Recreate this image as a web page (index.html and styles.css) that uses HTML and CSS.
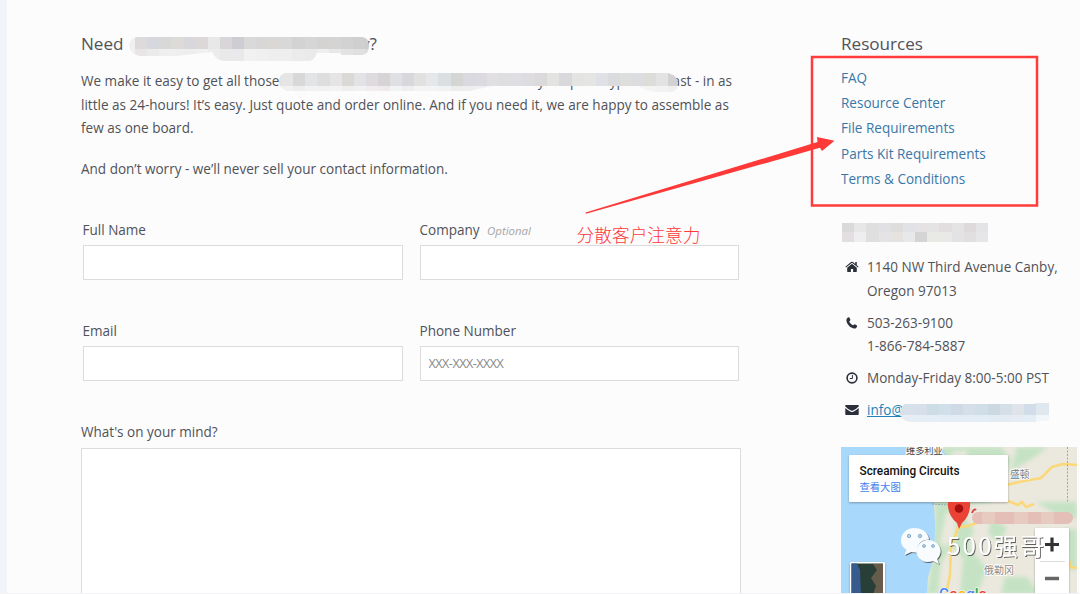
FILE: index.html
```html
<!DOCTYPE html>
<html lang="en">
<head>
<meta charset="utf-8">
<title>Contact</title>
<link rel="stylesheet" href="styles.css">
</head>
<body>
<div class="page">
  <main class="main">
    <h2 class="heading heading-split"><span>Need</span><span>y?</span></h2>
    <div class="intro">
      <div class="split"><span>We make it easy to get all those</span><span>your prototype runs fast - in as</span></div>
      <div>little as 24-hours! It’s easy. Just quote and order online. And if you need it, we are happy to assemble as</div>
      <div>few as one board.</div>
    </div>
    <p class="privacy">And don’t worry - we’ll never sell your contact information.</p>
    <form class="form">
      <div class="grid">
        <label class="field"><span class="label">Full Name</span><input class="input" type="text"></label>
        <label class="field"><span class="label">Company <em class="optional">Optional</em></span><input class="input" type="text"></label>
        <label class="field"><span class="label">Email</span><input class="input" type="text"></label>
        <label class="field"><span class="label">Phone Number</span><input class="input" type="text" placeholder="XXX-XXX-XXXX"></label>
      </div>
      <label class="field message"><span class="label">What's on your mind?</span><textarea class="textarea"></textarea></label>
    </form>
  </main>
  <aside class="side">
    <h2 class="heading">Resources</h2>
    <nav class="links">
      <a>FAQ</a><a>Resource Center</a><a>File Requirements</a><a>Parts Kit Requirements</a><a>Terms &amp; Conditions</a>
    </nav>
    <div class="company"></div>
    <ul class="contact">
      <li><svg class="icon" viewBox="0 0 14 14"><path fill="#2b2f3a" d="M7 3.7 2.2 7.7V11.6q0 .4.4.4H5.9V8.9H8.1V12h3.3q.4 0 .4-.4V7.7z"/><path fill="#2b2f3a" d="M13.6 6.8 11.8 5.3V2H10.2V3.9L8 2.1Q7 1.4 6 2.1L.4 6.8l.6.7L7 2.7l6 4.8z"/></svg><span>1140 NW Third Avenue Canby,<br>Oregon 97013</span></li>
      <li><svg class="icon" viewBox="0 0 14 14"><path fill="#2b2f3a" d="M2.1 2.2C3 1.4 4.1 1 4.5 1.8L5.4 3.8C5.7 4.5 4.2 5.1 4.3 5.7 4.7 6.8 6.9 9 7.9 9.3 8.6 9.4 9.1 7.9 9.8 8.2L11.9 9.5C12.4 10 11.9 11.6 10.9 12.2 8.6 13.2 5.5 11.3 3.8 9.4 1.9 7.2.6 4.1 2.1 2.2Z"/></svg><span>503-263-9100<br>1-866-784-5887</span></li>
      <li><svg class="icon" viewBox="0 0 14 14"><circle cx="7" cy="7" r="4.9" fill="none" stroke="#2b2f3a" stroke-width="1.6"/><path d="M7.4 4V7.5H4.8" fill="none" stroke="#2b2f3a"/></svg><span>Monday-Friday 8:00-5:00 PST</span></li>
      <li><svg class="icon" viewBox="0 0 14 14"><path fill="#2b2f3a" d="M.3 2.1H13.7V3.4Q11 6.1 8 7.6 7 8.1 6 7.6 3 6.1.3 3.4ZM.3 5Q3 7.5 5.7 8.7 7 9.3 8.3 8.7 11 7.5 13.7 5V11.2Q13.7 12 13 12H1Q.3 12 .3 11.2Z"/></svg><a class="mail">info@</a></li>
    </ul>
    <svg class="map" viewBox="0 0 236 147">
      <defs>
        <filter id="soft" x="-20%" y="-20%" width="140%" height="140%"><feGaussianBlur stdDeviation="2"/></filter>
        <filter id="drop" x="-20%" y="-20%" width="140%" height="150%"><feDropShadow dx="0" dy="1" stdDeviation="1" flood-opacity=".3"/></filter>
        <filter id="mark" x="-20%" y="-20%" width="140%" height="150%"><feDropShadow dx="1" dy="1" stdDeviation=".5" flood-color="#333" flood-opacity=".75"/></filter>
      </defs>
      <rect width="236" height="147" fill="#ebe8de"/>
      <g fill="#c5e3c4" filter="url(#soft)">
        <path d="M98 0H160L170 12 164 30 150 55 128 58 124 72 133 82 128 100 146 122 136 147H119L122 112 111 98 100 116 97 147H86L92 105 94 60 85 25 90 8Z"/>
        <path d="M176 0H207L194 10 170 24ZM195 55H236V72L216 68ZM150 72 166 80 159 95 147 87ZM164 130H186L198 147H160Z"/>
        <path d="M223 82H236V123H227Z"/>
      </g>
      <g fill="#ebe8de" filter="url(#soft)"><path d="M111 5 126 3 125 20 113 42 104 38ZM105 66 115 63 115 88 105 100 99 96Z"/></g>
      <path d="M0 0H65L82 8 94 5 99 12 92 24 94 48 93 58 94 79 93 110 87 130 86 147H0Z" fill="#a8d8fc"/>
      <path d="M89 0 101 1 105 8 99 25 95 17Z" fill="#a8d8fc"/>
      <path d="M165 38 183 34 200 31 211 20 222 17 236 18M167 54 177 58 181 55 185 60 193 57M117 81 110 100 109 128 105 147M117 80 127 79 138 75M226 108 230 120 236 121" fill="none" stroke="#fbd878" stroke-width="2.6"/>
      <path d="M226.500 0V56M227 92V112" stroke="#a4a4a4" stroke-dasharray="2 1.500" fill="none"/>
      <path d="M91 57 105 58 116 57" stroke="#98a9bd" stroke-dasharray="2 1" fill="none"/>
      <g class="map-label"><text x="65" y="6.500" font-size="9.200" fill="#444">维多利亚</text><text x="169" y="31" font-size="9.800" fill="#777">盛顿</text><text x="143" y="127" font-size="10" fill="#888">俄勒冈</text></g>
      <g filter="url(#drop)"><rect x="8" y="8" width="159" height="47" rx="1" fill="#fff"/></g>
      <text class="map-title" x="18.500" y="28" textLength="100" lengthAdjust="spacingAndGlyphs">Screaming Circuits</text>
      <text class="map-link" x="18.500" y="43.500">查看大图</text>
      <path d="M107 55H129Q130 68 121 76L118 82 116 76Q106 68 107 55Z" fill="#ea4335"/><circle cx="118" cy="61.500" r="4.300" fill="#a50e0e"/>
      <path d="M131 66Q133 61 135 63" stroke="#d94545" stroke-width="2" fill="none"/>
      <rect x="131" y="65" width="101" height="12" rx="6" fill="#e4bfb7"/><path d="M141 65h13v12h-13zM173 65h14v12h-14zM200 65h13v12h-13z" fill="#e7cbc1"/>
      <g filter="url(#drop)"><rect x="194" y="81" width="34" height="70" rx="1" fill="#fff"/></g>
      <path d="M204 97.500H218M211 90.500V104.500" stroke="#333" stroke-width="3.200"/><path d="M199 114.500H224" stroke="#ddd"/><path d="M204 131.500H218" stroke="#666" stroke-width="3.500"/>
      <g filter="url(#drop)"><rect x="9" y="115" width="35" height="34" rx="1.500" fill="#fff"/></g>
      <rect x="10.500" y="116.500" width="31.500" height="31" fill="#283f38"/><path d="M10.500 116.500H16L19 123 20 147H10.500Z" fill="#375b8d"/><path d="M32 117H42V147H32L35 139 30 131 36 123Z" fill="#665c4c"/>
      <text class="google" x="98" y="152"><tspan fill="#4285f4">G</tspan><tspan fill="#ea4335">o</tspan><tspan fill="#fbbc05">o</tspan><tspan fill="#4285f4">g</tspan><tspan fill="#34a853">l</tspan><tspan fill="#ea4335">e</tspan></text>
      <g filter="url(#mark)" fill="#f8fcff">
        <path d="M73 81C66 81 60 86.500 60 93.500 60 98 62.500 101 65.500 103L63.500 108 70 105 76 105.500C75 97 81 92.500 88 92.500 87 85 81 81 73 81Z"/>
        <path d="M87 93C81 93 75.500 98 75.500 104 75.500 110 80 115 87 115L92 114 98 117 96 112C98 110 99.500 107 99.500 104 99.500 98 94 93 87 93Z"/>
      </g>
      <g fill="#a9d0ef" stroke="#567d9a" stroke-width=".5"><circle cx="68" cy="89" r="1.700"/><circle cx="79" cy="89" r="1.700"/><circle cx="83" cy="99" r="1.500"/><circle cx="92" cy="99" r="1.500"/></g>
      <text class="watermark" x="106" y="108" filter="url(#mark)" textLength="97">500强哥</text>
    </svg>
  </aside>
</div>
<svg class="notes" viewBox="0 0 1080 594">
  <defs>
    <clipPath id="c1"><path d="M138 37H361Q369 37 369 46 369 55 361 55H342L340 53H317Q314 61 309 61H226Q216 61 212 52L177 56H139Q129 53 129 45 131 37 138 37Z"/></clipPath>
    <clipPath id="c2"><path d="M285 73H668Q678 76 678 83 678 92 670 92H652L638 86H492L470 91H286Q279 88 279 81 279 75 285 73Z"/></clipPath>
    <clipPath id="c3"><path d="M904 404H1035V403H1049V421H1037V422H910Q900 421 900 411Z"/></clipPath>
  </defs>
  <g id="mosaics"></g>
  <rect x="812" y="57" width="225" height="148.500" fill="none" stroke="#ff3b3b" stroke-width="2.500"/>
  <path d="M585.500 212.600 817.500 142 817 137 834.500 140.800 822 151 820 147.800 586 213.800Z" fill="#ff3838"/>
  <text class="note-text" x="576.500" y="242" textLength="124">分散客户注意力</text>
</svg>
<div class="edge"></div>
<script src="mosaic.js"></script>
</body>
</html>
```
FILE: styles.css
```css
* { box-sizing: border-box; }
body {
  margin: 0;
  height: 594px;
  overflow: hidden;
  position: relative;
  background: #fcfcfc;
  color: #505258;
  font: 13.54px/23.4px "Open Sans", "Noto Sans CJK SC", sans-serif;
}
.page {
  display: grid;
  grid-template-columns: 659px 236px;
  grid-template-rows: 100%;
  column-gap: 101px;
  height: 593px;
  padding: 32px 0 0 74px;
  border-left: 7px solid #f3f4f9;
}
.main { display: flex; flex-direction: column; min-height: 0; }
.heading { margin: 0; font-size: 17.1px; line-height: 24px; font-weight: 400; }
.heading-split { display: flex; justify-content: space-between; width: 296px; }
.intro { margin-top: 14.4px; white-space: nowrap; }
.split { display: flex; justify-content: space-between; width: 651px; }
.privacy { margin: 17.400px 0 0; }
.form { display: flex; flex: 1; flex-direction: column; min-height: 0; margin-top: 37.2px; }
.grid {
  display: grid;
  grid-template-columns: 320px 319px;
  column-gap: 17px;
  row-gap: 40px;
  padding-left: 1.5px;
}
.field { display: block; }
.label { display: block; height: 26px; line-height: 22px; }
.optional { margin-left: 4px; font-size: 11.4px; color: #a5a5a5; }
.input {
  display: block;
  width: 100%;
  height: 35px;
  padding: 0 8px;
  border: 1px solid #dcdcdc;
  background: #fff;
  font: 12.6px "Open Sans", sans-serif;
}
.input::placeholder { color: #888; letter-spacing: -.5px; }
.message { display: flex; flex: 1; flex-direction: column; min-height: 0; margin-top: 40px; }
.message .label { flex: none; height: 27px; line-height: 23px; }
.textarea {
  display: block;
  width: 660px;
  flex: 1;
  min-height: 0;
  border: 1px solid #dcdcdc;
  border-bottom: 0;
  background: #fff;
  resize: none;
}
.links { display: grid; margin-top: 9.6px; line-height: 25.35px; color: #3977a8; }
.company { height: 19px; margin-top: 31px; }
.contact { list-style: none; margin: 14px 0 0; padding: 0; white-space: nowrap; }
.contact li { display: flex; gap: 8px; margin-bottom: 8.5px; padding-left: 4px; }
.icon { width: 14px; height: 14px; margin-top: 4px; flex: none; }
.mail { color: #2383b8; text-decoration: underline; }
.map { display: block; width: 236px; height: 147px; margin-top: 24.6px; overflow: hidden; }
.map-label { font-family: "Noto Sans CJK SC", sans-serif; stroke: #fff; stroke-width: 1.5px; paint-order: stroke; }
.map-title { font: 500 12.2px Roboto, sans-serif; fill: #111; }
.map-link { font: 10.3px "Noto Sans CJK SC", sans-serif; fill: #427fed; }
.google { font: 500 15px Roboto, sans-serif; stroke: #fff; stroke-width: 1px; paint-order: stroke; }
.watermark { font: 400 24px "Noto Sans CJK SC", sans-serif; fill: #fff; }
.notes { position: absolute; inset: 0; width: 1080px; height: 594px; pointer-events: none; }
.note-text { font: 300 17.7px "Noto Sans CJK SC", sans-serif; fill: #ff3838; }
.edge { position: absolute; left: 0; right: 0; bottom: 0; height: 1px; background: #f3f3f5; }
```
FILE: mosaic.js
```js
// Each row: x, y, cell width, cell height, clip id, cell colours.
const rows = [
  [123, 37, 12.1, 12, 'c1', 'f0f0f0 dcdada d7d8dd d8d8d8 dddbd7 d8d8dc dcd8d8 e8e8e8 d8d6d8 cecdd3 d9d9d9 d8d6d6 dad8d5 d8d8d8 d3d3d3 d7d6d7 d4d3d1 d5d3d4 d2d2d2 cfcfcf cdcdcd'],
  [123, 49, 12.1, 13, 'c1', 'f0f0f0 e8e5e6 ebebeb efefef efefef eeeeee f0f0f0 ececec e9e9e9 e9e9ec f1f1f1 f0f0f0 eeeeee eeeeee ebebeb eaeaea f0efef e9e8e8 e3e3e3 e0e0e0 dddddd'],
  [269, 73, 12.1, 13, 'c2', 'e3e3e3 e5e5e5 d9d8d9 e3e4e5 dedede e5e5e7 dad9d6 e3e3e6 dddbde d8d4d5 dee0e3 d8d8dc e1e1df e6e7e8 dcdfe1 d5d5d3 d9d9df dbdae0 e2dfe1 dedddf dfdee3 dddcde dcd9db e3e3e2 d9d9dc e4e4e2 e5e5e4 dfe1e7 dadbdc dededc dcdde0 dcdcd9 e3e3e3 d4d1d5 e4e6e7 dadcdc'],
  [269, 86, 12.1, 6, 'c2', 'f2f2f2 f2f2f2 eeeeee f2f2f3 f1f1f1 f3f3f3 efefed f1f1f4 efedf0 efebed f2f3f4 efeff2 f4f4f2 f4f4f5 f0f2f3 ededec eeeef1 f0eff3 f3f2f3 f2f2f3 f4f4f4 f4f4f4 f4f4f4 f4f4f4 f4f4f4 f4f4f4 f4f4f4 f4f4f4 f4f4f4 f4f4f4 f4f4f4 f4f4f4 f3f3f3 f0f0f0 f0f1f1 eeefef'],
  [842, 223, 12.17, 9, '', 'dadada e8e7e7 dfdfdf e1e0e3 dfdddc e1e2e5 e4e2e3 e5e4e4 e2dedf e5e4e5 dedadc e4e4e7'],
  [842, 232, 12.17, 10, '', 'e3dfe0 eeedef dfdfdf e5e3e6 e6e2e0 e7e8ea d4d4d4 e9e9e6 e9e9e7 e3e3e5 e2dfe1 e6e6e8'],
  [890, 403, 12.2, 11.500, 'c3', 'd8dfe9 d8e0e9 d6dfea cddde6 d1dfea d0dae6 d4dfe9 d0dfe7 ccd9e3 d4dfe7 e0e3ea d1dde9 dfe8ef dfe8ef'],
  [890, 414.500, 12.2, 8, 'c3', 'e6edf5 e6edf5 e5edf5 e5edf5 e4edf5 e4ecf5 e4edf5 e3edf5 e3ebf3 e4ebf2 e5ecf4 e5edf5 f2f6f9 f2f6f9']
];
document.getElementById('mosaics').innerHTML = rows.map(([x, y, w, h, clip, colours]) =>
  `<g shape-rendering="crispEdges" ${clip ? `clip-path="url(#${clip})"` : ''}>` +
  colours.split(' ').map((c, i) =>
    `<rect x="${x + i * w}" y="${y}" width="${w + .1}" height="${h}" fill="#${c}"/>`).join('') + '</g>'
).join('');
```
